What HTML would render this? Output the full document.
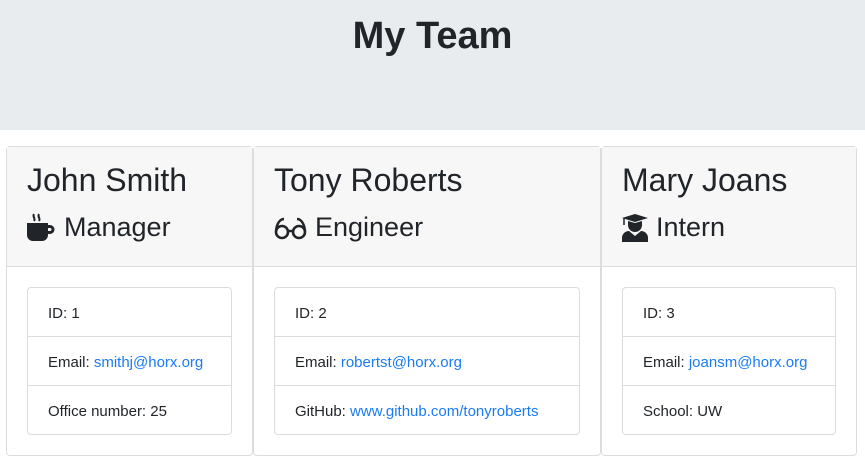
<!DOCTYPE html>
<html><head><style>
*{box-sizing:border-box;margin:0;padding:0}
body{width:865px;height:461px;background:#fff;font-family:"Liberation Sans",sans-serif;color:#212529;position:relative;overflow:hidden}
.jum{position:absolute;left:0;top:0;width:865px;height:130px;background:#e9ecef}
.jum h1{position:absolute;top:15px;width:100%;text-align:center;font-size:38px;font-weight:bold}
.card{position:absolute;top:146px;height:310px;border:1px solid #dcdcdc;border-radius:4px;background:#fff}
.hd{height:120px;background:#f7f7f7;border-bottom:1px solid #dcdcdc;position:relative}
.nm{position:absolute;left:20px;top:15px;font-size:32px;white-space:nowrap}
.rl{position:absolute;left:20px;top:65px;font-size:27px;white-space:nowrap;display:flex;align-items:center}
.rl svg{margin-right:8px}
.lg{position:absolute;top:140px;left:20px;right:20px;border:1px solid #dcdcdc;border-radius:4px}
.lg div{height:49px;line-height:52px;padding-left:20px;font-size:15px;border-top:1px solid #dcdcdc;white-space:nowrap}
.lg div:first-child{border-top:none;height:48px}
a{color:#1a7bf5;text-decoration:none}
</style></head><body>
<div class="jum"><h1>My Team</h1></div>

<div class="card" style="left:6px;width:247px">
<div class="hd"><div class="nm">John Smith</div>
<div class="rl"><svg width="29" height="29" viewBox="0 0 29 29"><path d="M7 1c-2 3 2 4 0 7M12 1c-2 3 2 4 0 7" stroke="#212529" stroke-width="2" fill="none"/><path d="M0 10h21v12a6 6 0 0 1-6 6H6a6 6 0 0 1-6-6z" fill="#212529"/><path d="M21 12h2a4.5 4.5 0 0 1 0 9h-2v-3h2a1.5 1.5 0 0 0 0-3h-2z" fill="#212529"/></svg>Manager</div></div>
<div class="lg"><div>ID: 1</div><div>Email: <a>smithj@horx.org</a></div><div>Office number: 25</div></div>
</div>

<div class="card" style="left:253px;width:348px">
<div class="hd"><div class="nm">Tony Roberts</div>
<div class="rl"><svg width="33" height="26" viewBox="0 0 33 26"><path d="M10 4c-5 0-8 7-8 13M23 4c5 0 8 7 8 13" stroke="#212529" stroke-width="2.4" fill="none"/><circle cx="8" cy="17" r="6" stroke="#212529" stroke-width="2.6" fill="none"/><circle cx="25" cy="17" r="6" stroke="#212529" stroke-width="2.6" fill="none"/><path d="M14 16h5" stroke="#212529" stroke-width="2.4"/></svg>Engineer</div></div>
<div class="lg"><div>ID: 2</div><div>Email: <a>robertst@horx.org</a></div><div>GitHub: <a>www.github.com/tonyroberts</a></div></div>
</div>

<div class="card" style="left:601px;width:256px">
<div class="hd"><div class="nm">Mary Joans</div>
<div class="rl"><svg width="26" height="29" viewBox="0 0 26 29"><path d="M13 1L26 5 13 9 0 5z" fill="#212529"/><path d="M2 5v7" stroke="#212529" stroke-width="1.5"/><path d="M6 8v4a7 7 0 0 0 14 0V8l-7 2z" fill="#212529"/><path d="M0 29v-4a7 7 0 0 1 7-7l6 5 6-5a7 7 0 0 1 7 7v4z" fill="#212529"/></svg>Intern</div></div>
<div class="lg"><div>ID: 3</div><div>Email: <a>joansm@horx.org</a></div><div>School: UW</div></div>
</div>
</body></html>
